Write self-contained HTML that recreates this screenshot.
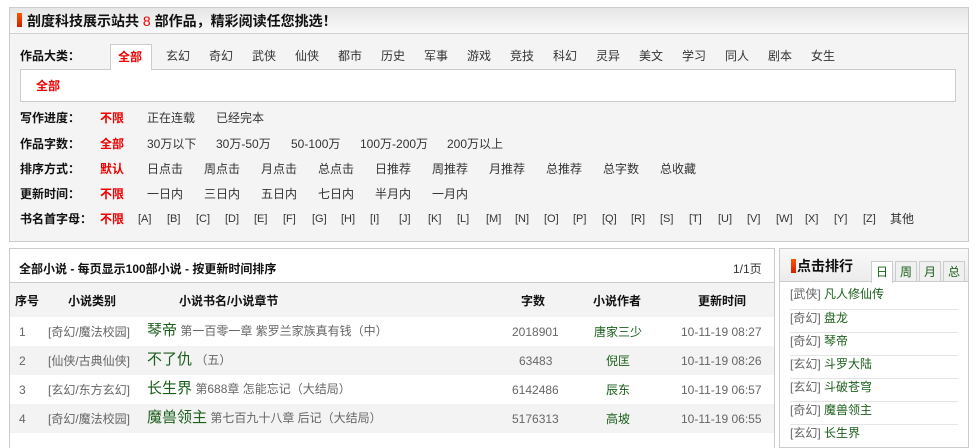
<!DOCTYPE html>
<html><head><meta charset="utf-8"><style>
*{margin:0;padding:0;box-sizing:border-box}
body{width:977px;height:441px;background:#fff;font-family:"Liberation Sans","Noto Sans CJK SC",sans-serif;font-size:12px;color:#333;position:relative;overflow:hidden}
.a{position:absolute;white-space:nowrap;line-height:14px}
.b{font-weight:bold;color:#111}
.r{color:#e00;font-weight:bold}
.g{color:#1a5e1a}
.gr{color:#666}
</style></head><body>
<!-- top panel -->
<div class="a" style="left:9px;top:7px;width:960px;height:235px;border:1px solid #ccc;background:#f4f4f4"></div>
<div class="a" style="left:10px;top:8px;width:958px;height:26px;background:linear-gradient(#e6e6e6,#f9f9f9);border-bottom:1px solid #d0d0d0"></div>
<div class="a" style="left:17px;top:13px;width:5px;height:14px;background:linear-gradient(#f50,#c20)"></div>
<div class="a b" style="left:27px;top:13px;font-size:14px;line-height:16px">剖度科技展示站共 <span style="color:#e00;font-weight:normal">8</span> 部作品，精彩阅读任您挑选！</div>
<div class="a b" style="left:20px;top:49px">作品大类：</div>
<div class="a" style="left:20px;top:69px;width:936px;height:33px;background:#fff;border:1px solid #ccc"></div>
<div class="a" style="left:110px;top:44px;width:42px;height:26px;background:#fff;border:1px solid #ccc;border-bottom:none"></div>
<div class="a r" style="left:118px;top:50px">全部</div>
<div class="a r" style="left:36px;top:79px">全部</div>
<div class="a" style="left:166px;top:49px">玄幻</div><div class="a" style="left:209px;top:49px">奇幻</div><div class="a" style="left:252px;top:49px">武侠</div><div class="a" style="left:295px;top:49px">仙侠</div><div class="a" style="left:338px;top:49px">都市</div><div class="a" style="left:381px;top:49px">历史</div><div class="a" style="left:424px;top:49px">军事</div><div class="a" style="left:467px;top:49px">游戏</div><div class="a" style="left:510px;top:49px">竞技</div><div class="a" style="left:553px;top:49px">科幻</div><div class="a" style="left:596px;top:49px">灵异</div><div class="a" style="left:639px;top:49px">美文</div><div class="a" style="left:682px;top:49px">学习</div><div class="a" style="left:725px;top:49px">同人</div><div class="a" style="left:768px;top:49px">剧本</div><div class="a" style="left:811px;top:49px">女生</div>

<div class="a b" style="left:20px;top:111px">写作进度：</div><div class="a r" style="left:100px;top:111px">不限</div><div class="a" style="left:147px;top:111px">正在连载</div><div class="a" style="left:216px;top:111px">已经完本</div>
<div class="a b" style="left:20px;top:137px">作品字数：</div><div class="a r" style="left:100px;top:137px">全部</div><div class="a" style="left:147px;top:137px">30万以下</div><div class="a" style="left:216px;top:137px">30万-50万</div><div class="a" style="left:291px;top:137px">50-100万</div><div class="a" style="left:360px;top:137px">100万-200万</div><div class="a" style="left:447px;top:137px">200万以上</div>
<div class="a b" style="left:20px;top:162px">排序方式：</div><div class="a r" style="left:100px;top:162px">默认</div>
<div class="a" style="left:147px;top:162px">日点击</div><div class="a" style="left:204px;top:162px">周点击</div><div class="a" style="left:261px;top:162px">月点击</div><div class="a" style="left:318px;top:162px">总点击</div><div class="a" style="left:375px;top:162px">日推荐</div><div class="a" style="left:432px;top:162px">周推荐</div><div class="a" style="left:489px;top:162px">月推荐</div><div class="a" style="left:546px;top:162px">总推荐</div><div class="a" style="left:603px;top:162px">总字数</div><div class="a" style="left:660px;top:162px">总收藏</div>
<div class="a b" style="left:20px;top:187px">更新时间：</div><div class="a r" style="left:100px;top:187px">不限</div>
<div class="a" style="left:147px;top:187px">一日内</div><div class="a" style="left:204px;top:187px">三日内</div><div class="a" style="left:261px;top:187px">五日内</div><div class="a" style="left:318px;top:187px">七日内</div><div class="a" style="left:375px;top:187px">半月内</div><div class="a" style="left:432px;top:187px">一月内</div>
<div class="a b" style="left:20px;top:212px">书名首字母：</div><div class="a r" style="left:100px;top:212px">不限</div>
<div class="a" style="left:138px;top:212px;font-size:11px;word-spacing:0">
<span style="position:absolute;left:0">[A]</span><span style="position:absolute;left:29px">[B]</span><span style="position:absolute;left:58px">[C]</span><span style="position:absolute;left:87px">[D]</span><span style="position:absolute;left:116px">[E]</span><span style="position:absolute;left:145px">[F]</span><span style="position:absolute;left:174px">[G]</span><span style="position:absolute;left:203px">[H]</span><span style="position:absolute;left:232px">[I]</span><span style="position:absolute;left:261px">[J]</span><span style="position:absolute;left:290px">[K]</span><span style="position:absolute;left:319px">[L]</span><span style="position:absolute;left:348px">[M]</span><span style="position:absolute;left:377px">[N]</span><span style="position:absolute;left:406px">[O]</span><span style="position:absolute;left:435px">[P]</span><span style="position:absolute;left:464px">[Q]</span><span style="position:absolute;left:493px">[R]</span><span style="position:absolute;left:522px">[S]</span><span style="position:absolute;left:551px">[T]</span><span style="position:absolute;left:580px">[U]</span><span style="position:absolute;left:609px">[V]</span><span style="position:absolute;left:638px">[W]</span><span style="position:absolute;left:667px">[X]</span><span style="position:absolute;left:696px">[Y]</span><span style="position:absolute;left:725px">[Z]</span><span style="position:absolute;left:752px;font-size:12px">其他</span></div>

<!-- list panel -->
<div class="a" style="left:9px;top:248px;width:766px;height:200px;border:1px solid #ccc;border-bottom:none;background:#fff"></div>
<div class="a b" style="left:19px;top:262px">全部小说 - 每页显示100部小说 - 按更新时间排序</div>
<div class="a" style="left:733px;top:262px">1/1页</div>
<div class="a" style="left:10px;top:282px;width:764px;height:35px;background:#f3f3f3;border-top:1px solid #ccc"></div>
<div class="a b" style="left:15px;top:294px">序号</div><div class="a b" style="left:68px;top:294px">小说类别</div><div class="a b" style="left:179px;top:294px">小说书名/小说章节</div><div class="a b" style="left:521px;top:294px">字数</div><div class="a b" style="left:593px;top:294px">小说作者</div><div class="a b" style="left:698px;top:294px">更新时间</div>
<div class="a" style="left:10px;top:346px;width:764px;height:29px;background:#f3f3f3"></div>
<div class="a" style="left:10px;top:404px;width:764px;height:29px;background:#f3f3f3"></div>

<div class="a gr" style="left:19px;top:325px">1</div><div class="a gr" style="left:48px;top:325px">[奇幻/魔法校园]</div><div class="a gr" style="left:147px;top:324px"><span class="g" style="font-size:15px">琴帝</span> 第一百零一章 紫罗兰家族真有钱（中）</div><div class="a gr" style="left:512px;top:325px">2018901</div><div class="a g" style="left:594px;top:325px">唐家三少</div><div class="a gr" style="left:681px;top:325px">10-11-19 08:27</div>
<div class="a gr" style="left:19px;top:354px">2</div><div class="a gr" style="left:48px;top:354px">[仙侠/古典仙侠]</div><div class="a gr" style="left:147px;top:353px"><span class="g" style="font-size:15px">不了仇</span> （五）</div><div class="a gr" style="left:519px;top:354px">63483</div><div class="a g" style="left:606px;top:354px">倪匡</div><div class="a gr" style="left:681px;top:354px">10-11-19 08:26</div>
<div class="a gr" style="left:19px;top:383px">3</div><div class="a gr" style="left:48px;top:383px">[玄幻/东方玄幻]</div><div class="a gr" style="left:147px;top:382px"><span class="g" style="font-size:15px">长生界</span> 第688章 怎能忘记（大结局）</div><div class="a gr" style="left:512px;top:383px">6142486</div><div class="a g" style="left:606px;top:383px">辰东</div><div class="a gr" style="left:681px;top:383px">10-11-19 06:57</div>
<div class="a gr" style="left:19px;top:412px">4</div><div class="a gr" style="left:48px;top:412px">[奇幻/魔法校园]</div><div class="a gr" style="left:147px;top:411px"><span class="g" style="font-size:15px">魔兽领主</span> 第七百九十八章 后记（大结局）</div><div class="a gr" style="left:512px;top:412px">5176313</div><div class="a g" style="left:606px;top:412px">高坡</div><div class="a gr" style="left:681px;top:412px">10-11-19 06:55</div>

<!-- rank panel -->
<div class="a" style="left:779px;top:248px;width:190px;height:200px;border:1px solid #ccc;background:#fff"></div>
<div class="a" style="left:780px;top:249px;width:188px;height:33px;background:linear-gradient(#f9f9f9,#ececec);border-bottom:1px solid #ccc"></div>
<div class="a" style="left:791px;top:259px;width:5px;height:14px;background:linear-gradient(#f50,#c20)"></div>
<div class="a b" style="left:797px;top:258px;font-size:14px;line-height:16px">点击排行</div>
<div class="a" style="left:871px;top:261px;width:22px;height:22px;background:#fff;border:1px solid #ccc;border-bottom:none;text-align:center;line-height:20px;color:#1a5e1a">日</div>
<div class="a" style="left:895px;top:261px;width:22px;height:21px;background:#f0f0f0;border:1px solid #ccc;text-align:center;line-height:20px;color:#1a5e1a">周</div>
<div class="a" style="left:919px;top:261px;width:22px;height:21px;background:#f0f0f0;border:1px solid #ccc;text-align:center;line-height:20px;color:#1a5e1a">月</div>
<div class="a" style="left:943px;top:261px;width:22px;height:21px;background:#f0f0f0;border:1px solid #ccc;text-align:center;line-height:20px;color:#1a5e1a">总</div>
<div class="a" style="left:790px;top:287px;width:168px">
<div style="height:23px;border-bottom:1px solid #e4e4e4;line-height:14px"><span class="gr">[武侠]</span> <span class="g">凡人修仙传</span></div>
<div style="height:23px;border-bottom:1px solid #e4e4e4;line-height:14px;padding-top:1px"><span class="gr">[奇幻]</span> <span class="g">盘龙</span></div>
<div style="height:23px;border-bottom:1px solid #e4e4e4;line-height:14px;padding-top:1px"><span class="gr">[奇幻]</span> <span class="g">琴帝</span></div>
<div style="height:23px;border-bottom:1px solid #e4e4e4;line-height:14px;padding-top:1px"><span class="gr">[玄幻]</span> <span class="g">斗罗大陆</span></div>
<div style="height:23px;border-bottom:1px solid #e4e4e4;line-height:14px;padding-top:1px"><span class="gr">[玄幻]</span> <span class="g">斗破苍穹</span></div>
<div style="height:23px;border-bottom:1px solid #e4e4e4;line-height:14px;padding-top:1px"><span class="gr">[奇幻]</span> <span class="g">魔兽领主</span></div>
<div style="height:23px;line-height:14px;padding-top:1px"><span class="gr">[玄幻]</span> <span class="g">长生界</span></div>
</div>
</body></html>
